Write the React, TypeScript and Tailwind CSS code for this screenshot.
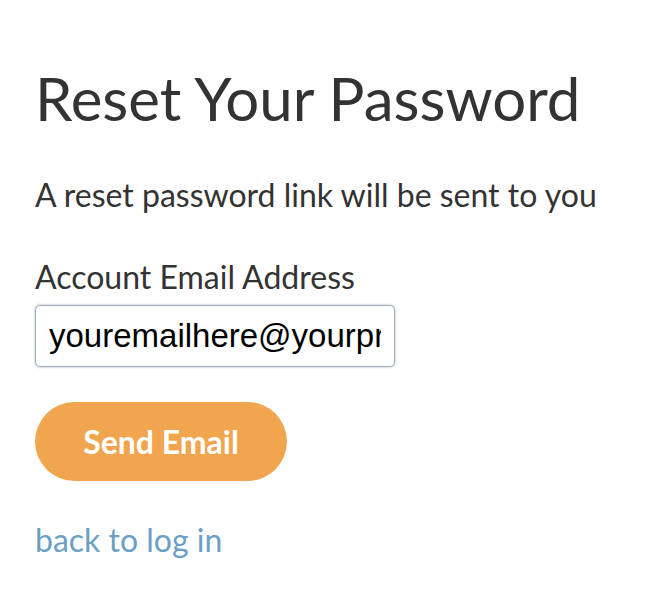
export default function App() {
  return (
    <div className="min-h-[608px] w-[646px] bg-white px-[35px] pt-[62px] font-['Lato',sans-serif] text-[#333333]">
      <h1 className="text-[60px] leading-[72px]">Reset Your Password</h1>

      <p className="mt-[41px] text-[32px] leading-[40px]">A reset password link will be sent to you</p>

      <div className="mt-[42px] flex flex-col">
        <label className="text-[32px] leading-[40px]">Account Email Address</label>
        <input
          type="email"
          defaultValue="youremailhere@yourprovider.com"
          className="mt-[8px] h-[62px] w-[360px] rounded-[5px] border border-[#a9a9a9] bg-white px-[13px] font-['Liberation_Sans',sans-serif] text-[33px] text-black shadow-[0_0_3px_rgba(110,150,190,0.6)] outline-none"
        />
      </div>

      <button className="mt-[35px] h-[79px] w-[252px] rounded-full bg-[#f0a54e] text-[32px] font-bold text-white">
        Send Email
      </button>

      <div className="mt-[39px]">
        <a href="#" className="text-[32px] leading-[40px] text-[#6d9fc5]">back to log in</a>
      </div>
    </div>
  );
}
